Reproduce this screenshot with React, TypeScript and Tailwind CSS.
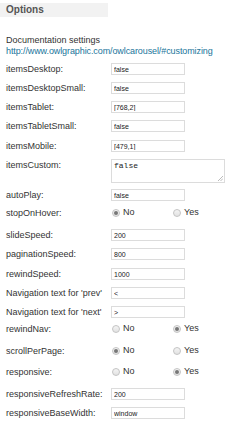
import React from "react";

function Label({ children }: { children: React.ReactNode }) {
  return (
    <div className="w-[105px] shrink-0 text-[9px] leading-[12px] text-[#333] whitespace-nowrap">
      {children}
    </div>
  );
}

function InputRow({ label, value, mt }: { label: string; value: string; mt: string }) {
  return (
    <div className={`flex items-center h-[12px] ${mt}`}>
      <Label>{label}</Label>
      <input
        readOnly
        value={value}
        className="w-[74px] h-[12px] border border-[#dcdcdc] bg-white px-[2px] text-[7px] leading-[10px] text-[#222] outline-none"
        style={{ fontFamily: '"Liberation Sans", Arial, sans-serif' }}
      />
    </div>
  );
}

function Radio({ checked }: { checked: boolean }) {
  return (
    <span className="relative inline-flex w-[8px] h-[8px] rounded-full border border-[#c4c4c4] bg-gradient-to-b from-[#f4f4f4] to-[#e2e2e2] items-center justify-center">
      {checked && <span className="w-[4px] h-[4px] rounded-full bg-[#777]" />}
    </span>
  );
}

function RadioRow({ label, yes, mt }: { label: string; yes: boolean; mt: string }) {
  return (
    <div className={`flex items-center h-[12px] ${mt}`}>
      <Label>{label}</Label>
      <div className="flex items-center w-[62px] pl-[1px]">
        <Radio checked={!yes} />
        <span className="ml-[3px] text-[9px] text-[#333]">No</span>
      </div>
      <div className="flex items-center">
        <Radio checked={yes} />
        <span className="ml-[3px] text-[9px] text-[#333]">Yes</span>
      </div>
    </div>
  );
}

export default function App() {
  return (
    <div
      className="w-[250px] h-[425px] bg-white overflow-hidden"
      style={{ fontFamily: '"Liberation Sans", Arial, sans-serif' }}
    >
      <div className="mt-[3px] w-[108px] h-[14px] bg-[#f2f2f2] pl-[6px] text-[10px] font-bold leading-[14px] text-[#555]">
        Options
      </div>
      <div className="pl-[6px]">
        <div className="mt-[18px] text-[9px] leading-[11px] text-[#333]">Documentation settings</div>
        <div className="text-[9px] leading-[11px] text-[#21759b] whitespace-nowrap tracking-[-0.1px]">
          http://www.owlgraphic.com/owlcarousel/#customizing
        </div>

        <InputRow label="itemsDesktop:" value="false" mt="mt-[6px]" />
        <InputRow label="itemsDesktopSmall:" value="false" mt="mt-[7px]" />
        <InputRow label="itemsTablet:" value="[768,2]" mt="mt-[7px]" />
        <InputRow label="itemsTabletSmall:" value="false" mt="mt-[7px]" />
        <InputRow label="itemsMobile:" value="[479,1]" mt="mt-[8px]" />

        <div className="flex items-start mt-[7px]">
          <Label>itemsCustom:</Label>
          <div className="relative w-[114px] h-[24px] border border-[#dcdcdc] bg-white px-[2px] pt-[1px] text-[8px] leading-[10px] text-[#222]"
            style={{ fontFamily: '"Liberation Mono", "Courier New", monospace' }}>
            false
            <svg className="absolute right-[1px] bottom-[1px]" width="5" height="5" viewBox="0 0 5 5">
              <path d="M5 0 L0 5 M5 2.5 L2.5 5" stroke="#aaa" strokeWidth="0.8" />
            </svg>
          </div>
        </div>

        <InputRow label="autoPlay:" value="false" mt="mt-[6px]" />
        <RadioRow label="stopOnHover:" yes={false} mt="mt-[6px]" />
        <InputRow label="slideSpeed:" value="200" mt="mt-[10px]" />
        <InputRow label="paginationSpeed:" value="800" mt="mt-[7px]" />
        <InputRow label="rewindSpeed:" value="1000" mt="mt-[8px]" />
        <InputRow label="Navigation text for 'prev'" value="<" mt="mt-[7px]" />
        <InputRow label="Navigation text for 'next'" value=">" mt="mt-[7px]" />
        <RadioRow label="rewindNav:" yes={true} mt="mt-[5px]" />
        <RadioRow label="scrollPerPage:" yes={false} mt="mt-[10px]" />
        <RadioRow label="responsive:" yes={true} mt="mt-[9px]" />
        <InputRow label="responsiveRefreshRate:" value="200" mt="mt-[10px]" />
        <InputRow label="responsiveBaseWidth:" value="window" mt="mt-[7px]" />
      </div>
    </div>
  );
}
